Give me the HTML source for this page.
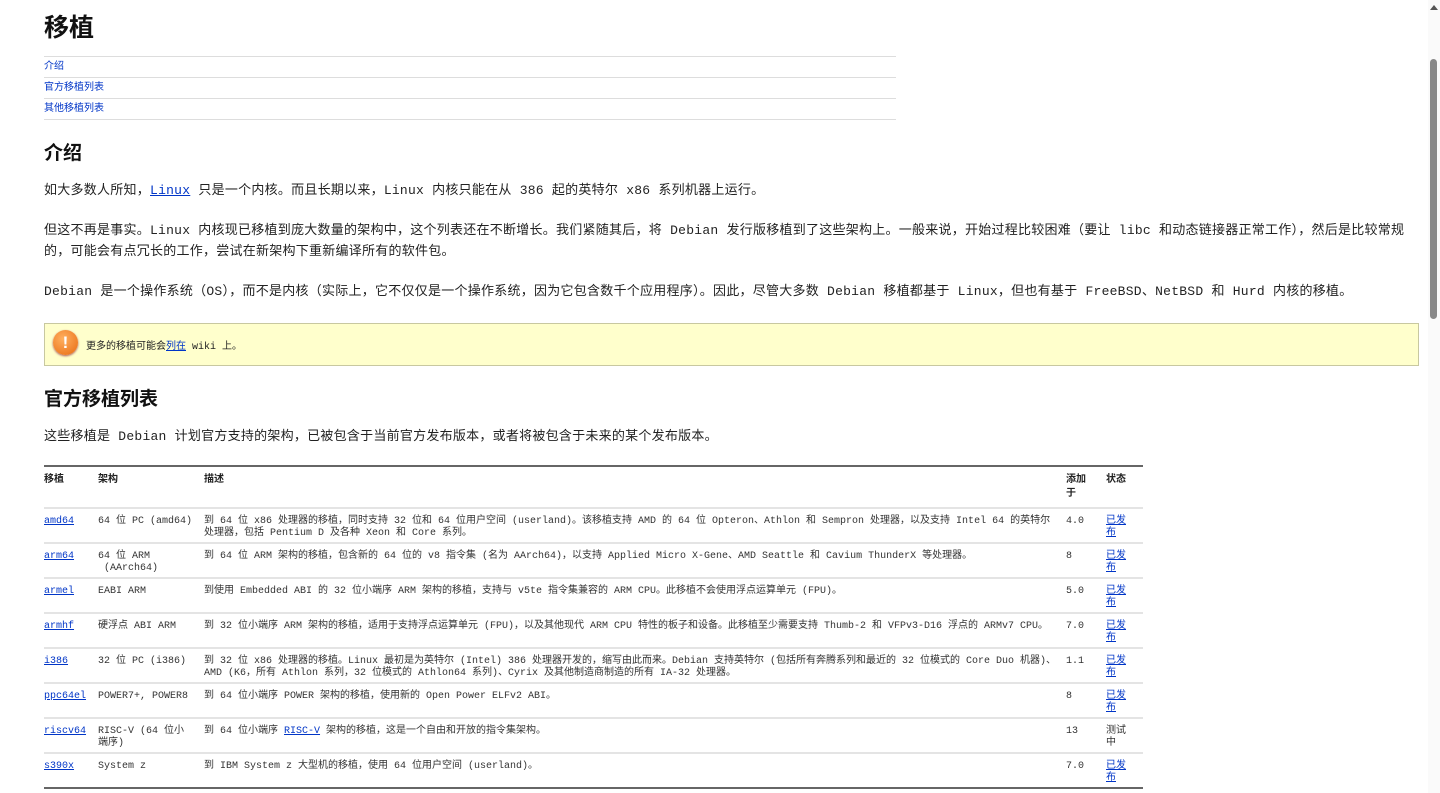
<!DOCTYPE html>
<html><head><meta charset="utf-8"><style>
body{margin:0;background:#fff;color:#222;font-family:"Liberation Mono","Noto Sans CJK SC",monospace;font-size:13px;overflow:hidden;width:1440px;height:793px;position:relative}
.wrap{position:absolute;left:44px;top:0;width:1375px}
h1{font-family:"Liberation Sans","Noto Sans CJK SC",sans-serif;font-size:25px;font-weight:bold;margin:0;position:absolute;top:8px;left:0;color:#111}
h2{font-family:"Liberation Sans","Noto Sans CJK SC",sans-serif;font-size:19px;font-weight:bold;margin:0;position:absolute;left:0;color:#111}
a{color:#0035c7}
.toc{position:absolute;top:56px;left:0;width:852px;border-top:1px solid #ddd;font-family:"Liberation Sans","Noto Sans CJK SC",sans-serif;font-size:10px}
.toc div{height:20px;line-height:20px;border-bottom:1px solid #ddd}
.toc a{text-decoration:none}
p{position:absolute;left:0;margin:0;line-height:21px;width:1370px;letter-spacing:0.25px}
.note{position:absolute;left:0;top:323px;width:1373px;height:41px;background:#ffffcc;border:1px solid #c8c8a0;font-size:10px}
.ico{position:absolute;left:8px;top:6px;width:25px;height:25px;border-radius:50%;background:radial-gradient(circle at 40% 35%,#ffb060,#e86a10);color:#fff;font:bold 17px "Liberation Sans";text-align:center;line-height:25px;box-shadow:0 1px 2px #a55}
table{position:absolute;left:0;top:465px;width:1099px;border-collapse:collapse;border-top:2px solid #666;border-bottom:2px solid #666;font-size:10px;font-family:"Liberation Mono","Noto Sans CJK SC",monospace}
th{text-align:left;font-family:"Liberation Sans","Noto Sans CJK SC",sans-serif;font-size:10px;font-weight:bold;vertical-align:top;padding:6px 0 0;height:34px;line-height:14px}
td{vertical-align:top;padding:7px 8px 0 0;height:26px;line-height:12px;border-top:2px solid #e4e4e4;color:#333}
.sb{position:absolute;right:3px;top:59px;width:7px;height:260px;background:#888;border-radius:4px}
.sbt{position:absolute;right:0;top:0;width:12px;height:793px;background:#fafafa}
</style></head><body>
<div class="sbt"></div><div class="sb"></div>
<div style="position:absolute;right:2px;top:5px;width:0;height:0;border-left:4px solid transparent;border-right:4px solid transparent;border-bottom:5px solid #555"></div>
<div class="wrap">
<h1>移植</h1>
<div class="toc"><div><a href="#">介绍</a></div><div><a href="#">官方移植列表</a></div><div><a href="#">其他移植列表</a></div></div>
<h2 style="top:138px">介绍</h2>
<p style="top:180px">如大多数人所知，<a href="#">Linux</a> 只是一个内核。而且长期以来，Linux 内核只能在从 386 起的英特尔 x86 系列机器上运行。</p>
<p style="top:220px">但这不再是事实。Linux 内核现已移植到庞大数量的架构中，这个列表还在不断增长。我们紧随其后，将 Debian 发行版移植到了这些架构上。一般来说，开始过程比较困难（要让 libc 和动态链接器正常工作），然后是比较常规的，可能会有点冗长的工作，尝试在新架构下重新编译所有的软件包。</p>
<p style="top:281px">Debian 是一个操作系统（OS），而不是内核（实际上，它不仅仅是一个操作系统，因为它包含数千个应用程序）。因此，尽管大多数 Debian 移植都基于 Linux，但也有基于 FreeBSD、NetBSD 和 Hurd 内核的移植。</p>
<div class="note"><div class="ico">!</div><div style="position:absolute;left:41px;top:13px">更多的移植可能会<a href="#">列在</a> wiki 上。</div></div>
<h2 style="top:384px">官方移植列表</h2>
<p style="top:426px">这些移植是 Debian 计划官方支持的架构，已被包含于当前官方发布版本，或者将被包含于未来的某个发布版本。</p>
<table>
<colgroup><col style="width:54px"><col style="width:106px"><col style="width:862px"><col style="width:40px"><col></colgroup>
<tr><th>移植</th><th>架构</th><th>描述</th><th>添加<br>于</th><th>状态</th></tr>
<tr><td><a href="#">amd64</a></td><td>64 位 PC (amd64)</td><td>到 64 位 x86 处理器的移植，同时支持 32 位和 64 位用户空间 (userland)。该移植支持 AMD 的 64 位 Opteron、Athlon 和 Sempron 处理器，以及支持 Intel 64 的英特尔处理器，包括 Pentium D 及各种 Xeon 和 Core 系列。</td><td>4.0</td><td><a href="#">已发<br>布</a></td></tr>
<tr><td><a href="#">arm64</a></td><td>64 位 ARM<br>&nbsp;(AArch64)</td><td>到 64 位 ARM 架构的移植，包含新的 64 位的 v8 指令集 (名为 AArch64)，以支持 Applied Micro X-Gene、AMD Seattle 和 Cavium ThunderX 等处理器。</td><td>8</td><td><a href="#">已发<br>布</a></td></tr>
<tr><td><a href="#">armel</a></td><td>EABI ARM</td><td>到使用 Embedded ABI 的 32 位小端序 ARM 架构的移植，支持与 v5te 指令集兼容的 ARM CPU。此移植不会使用浮点运算单元 (FPU)。</td><td>5.0</td><td><a href="#">已发<br>布</a></td></tr>
<tr><td><a href="#">armhf</a></td><td>硬浮点 ABI ARM</td><td>到 32 位小端序 ARM 架构的移植，适用于支持浮点运算单元 (FPU)，以及其他现代 ARM CPU 特性的板子和设备。此移植至少需要支持 Thumb-2 和 VFPv3-D16 浮点的 ARMv7 CPU。</td><td>7.0</td><td><a href="#">已发<br>布</a></td></tr>
<tr><td><a href="#">i386</a></td><td>32 位 PC (i386)</td><td>到 32 位 x86 处理器的移植。Linux 最初是为英特尔 (Intel) 386 处理器开发的，缩写由此而来。Debian 支持英特尔 (包括所有奔腾系列和最近的 32 位模式的 Core Duo 机器)、AMD (K6，所有 Athlon 系列，32 位模式的 Athlon64 系列)、Cyrix 及其他制造商制造的所有 IA-32 处理器。</td><td>1.1</td><td><a href="#">已发<br>布</a></td></tr>
<tr><td><a href="#">ppc64el</a></td><td>POWER7+, POWER8</td><td>到 64 位小端序 POWER 架构的移植，使用新的 Open Power ELFv2 ABI。</td><td>8</td><td><a href="#">已发<br>布</a></td></tr>
<tr><td><a href="#">riscv64</a></td><td>RISC-V (64 位小<br>端序)</td><td>到 64 位小端序 <a href="#">RISC-V</a> 架构的移植，这是一个自由和开放的指令集架构。</td><td>13</td><td>测试<br>中</td></tr>
<tr><td><a href="#">s390x</a></td><td>System z</td><td>到 IBM System z 大型机的移植，使用 64 位用户空间 (userland)。</td><td>7.0</td><td><a href="#">已发<br>布</a></td></tr>
</table>
</div>
</body></html>
